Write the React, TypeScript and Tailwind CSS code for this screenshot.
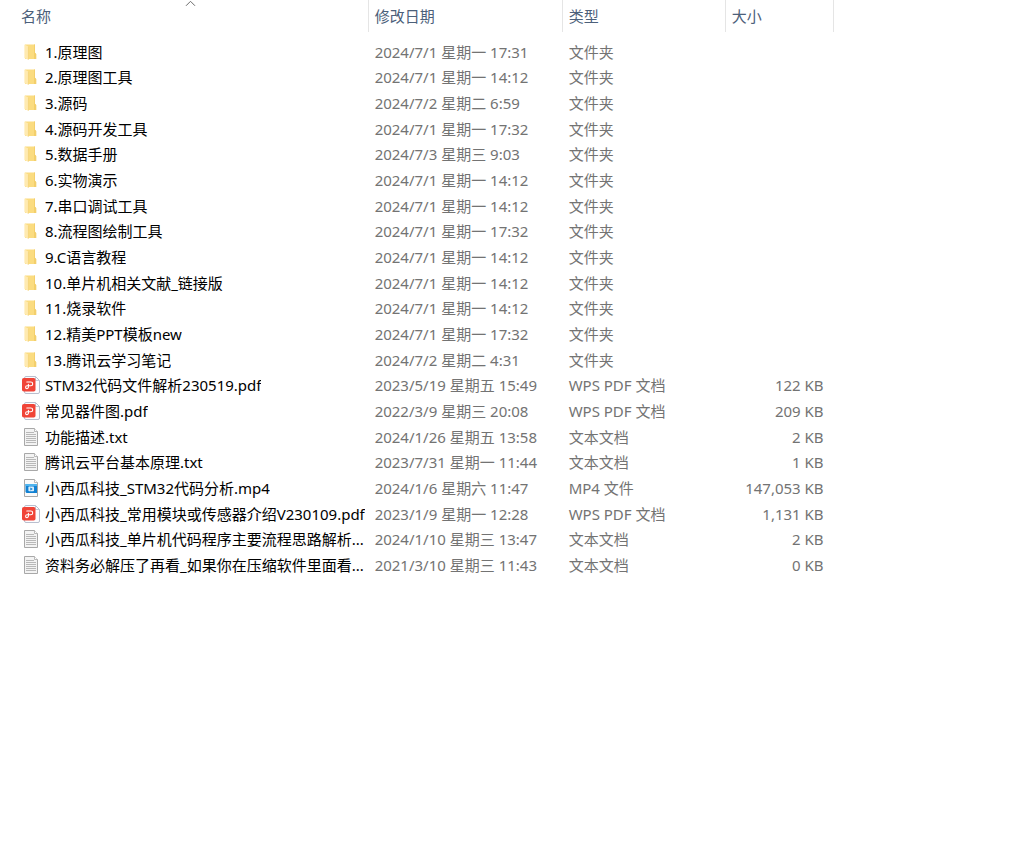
type FileKind = "folder" | "pdf" | "text" | "video";

interface FileEntry {
  name: string;
  modified: string;
  type: string;
  size?: string;
  kind: FileKind;
}

function folder(name: string, modified: string): FileEntry {
  return { name, modified, type: "文件夹", kind: "folder" };
}

const files: FileEntry[] = [
  folder("1.原理图", "2024/7/1 星期一 17:31"),
  folder("2.原理图工具", "2024/7/1 星期一 14:12"),
  folder("3.源码", "2024/7/2 星期二 6:59"),
  folder("4.源码开发工具", "2024/7/1 星期一 17:32"),
  folder("5.数据手册", "2024/7/3 星期三 9:03"),
  folder("6.实物演示", "2024/7/1 星期一 14:12"),
  folder("7.串口调试工具", "2024/7/1 星期一 14:12"),
  folder("8.流程图绘制工具", "2024/7/1 星期一 17:32"),
  folder("9.C语言教程", "2024/7/1 星期一 14:12"),
  folder("10.单片机相关文献_链接版", "2024/7/1 星期一 14:12"),
  folder("11.烧录软件", "2024/7/1 星期一 14:12"),
  folder("12.精美PPT模板new", "2024/7/1 星期一 17:32"),
  folder("13.腾讯云学习笔记", "2024/7/2 星期二 4:31"),
  { name: "STM32代码文件解析230519.pdf", modified: "2023/5/19 星期五 15:49", type: "WPS PDF 文档", size: "122 KB", kind: "pdf" },
  { name: "常见器件图.pdf", modified: "2022/3/9 星期三 20:08", type: "WPS PDF 文档", size: "209 KB", kind: "pdf" },
  { name: "功能描述.txt", modified: "2024/1/26 星期五 13:58", type: "文本文档", size: "2 KB", kind: "text" },
  { name: "腾讯云平台基本原理.txt", modified: "2023/7/31 星期一 11:44", type: "文本文档", size: "1 KB", kind: "text" },
  { name: "小西瓜科技_STM32代码分析.mp4", modified: "2024/1/6 星期六 11:47", type: "MP4 文件", size: "147,053 KB", kind: "video" },
  { name: "小西瓜科技_常用模块或传感器介绍V230109.pdf", modified: "2023/1/9 星期一 12:28", type: "WPS PDF 文档", size: "1,131 KB", kind: "pdf" },
  { name: "小西瓜科技_单片机代码程序主要流程思路解析...", modified: "2024/1/10 星期三 13:47", type: "文本文档", size: "2 KB", kind: "text" },
  { name: "资料务必解压了再看_如果你在压缩软件里面看...", modified: "2021/3/10 星期三 11:43", type: "文本文档", size: "0 KB", kind: "text" },
];

const columns = [
  { label: "名称", className: "w-[36%]", padding: "pl-[21px]", sorted: true },
  { label: "修改日期", className: "w-[194px]", padding: "pl-1.5", sorted: false },
  { label: "类型", className: "w-[163px]", padding: "pl-1.5", sorted: false },
  { label: "大小", className: "w-[108px]", padding: "pl-1.5", sorted: false },
];

function FileIcon({ kind }: { kind: FileKind }) {
  return (
    <svg className="size-5 shrink-0" viewBox="0 0 20 20" fill="none" aria-hidden="true">
      {kind === "folder" && (
        <>
          <path d="M4 2.5h10v8.2l1.2 1.2V17H4z" fill="#fbdc80" />
          <path d="M13 2.5h1v8.2l1.2 1.2V17H13z" fill="#f3cf6c" />
          <path d="M3.4 2.4 7.4 4.6v13.2L3.4 16z" fill="#ffeab0" />
          <path d="M7.4 4.6v13.2" stroke="#f0cd70" strokeWidth="0.6" />
        </>
      )}
      {kind === "pdf" && (
        <>
          <path
            d="M5 1.5h9.5l4 4V17a1.5 1.5 0 0 1-1.5 1.5H5A1.5 1.5 0 0 1 3.5 17V3A1.5 1.5 0 0 1 5 1.5z"
            fill="#fcfcfe"
            stroke="#b9bfce"
          />
          <path d="M14.5 1.5v4h4" stroke="#b9bfce" strokeWidth="0.8" />
          <rect x="1" y="3" width="13.5" height="13.5" rx="1.8" fill="#f04438" />
          <path
            d="M5.8 7h4a1.9 1.9 0 0 1 0 3.8H6a1.4 1.4 0 1 0 1.4 1.5V9.2"
            stroke="#fff"
            strokeWidth="1.1"
            strokeLinecap="round"
          />
        </>
      )}
      {(kind === "text" || kind === "video") && (
        <path d="M3.5 1.5h10l3 3v14h-13z" fill={kind === "text" ? "#f3f3f3" : "#fafafa"} stroke="#a8a8a8" />
      )}
      {kind === "text" && (
        <path
          d="M5 5.5h8M5 7.5h10M5 9.5h10M5 11.5h10M5 13.5h10M5 15.5h10"
          stroke="#b8b8b8"
        />
      )}
      {(kind === "text" || kind === "video") && (
        <path d="M13.5 1.5v3h3" fill="#fff" stroke="#a8a8a8" strokeWidth="0.8" />
      )}
      {kind === "video" && (
        <>
          <path d="M4.5 6H16v9H5.5l-1-1z" fill="#1181d3" />
          <path d="M4.5 6H16v2H4.5z" fill="#4fb4ee" />
          <rect x="7.4" y="8.6" width="5.6" height="4.6" rx="0.8" fill="#d9eefb" />
          <path d="M9.3 9.4v3l2.6-1.5z" fill="#1181d3" />
        </>
      )}
    </svg>
  );
}

export default function App() {
  return (
    <main className="min-h-screen bg-white font-['Noto_Sans','Noto_Sans_CJK_SC',sans-serif] text-[15px] leading-5 text-[#737373]">
      <table className="w-full table-fixed border-collapse text-left">
        <thead>
          <tr>
            {columns.map((column) => (
              <th
                key={column.label}
                scope="col"
                aria-sort={column.sorted ? "ascending" : undefined}
                className={`h-[39px] p-0 align-top font-normal text-[#4c607a] ${column.className}`}
              >
                <button
                  type="button"
                  className={`relative flex h-8 w-full items-center border-r border-[#e5e5e5] ${column.padding}`}
                >
                  {column.label}
                  {column.sorted && (
                    <svg
                      className="absolute top-0 left-[185px] h-[7px] w-[11px]"
                      viewBox="0 0 11 7"
                      fill="none"
                      aria-hidden="true"
                    >
                      <path d="M1 5.8 5.5 1.3 10 5.8" stroke="#6b6b6b" />
                    </svg>
                  )}
                </button>
              </th>
            ))}
            <td />
          </tr>
        </thead>
        <tbody>
          {files.map((file) => (
            <tr key={file.name} className="h-[26px] nth-[3n+1]:h-[25px]">
              <td className="p-0 pl-[21px]">
                <div className="flex items-center gap-1 text-black">
                  <FileIcon kind={file.kind} />
                  <span className="truncate">{file.name}</span>
                </div>
              </td>
              <td className="truncate p-0 pl-1.5">{file.modified}</td>
              <td className="truncate p-0 pl-1.5">{file.type}</td>
              <td className="p-0 pr-2.5 text-right whitespace-nowrap">{file.size}</td>
              <td />
            </tr>
          ))}
        </tbody>
      </table>
    </main>
  );
}
